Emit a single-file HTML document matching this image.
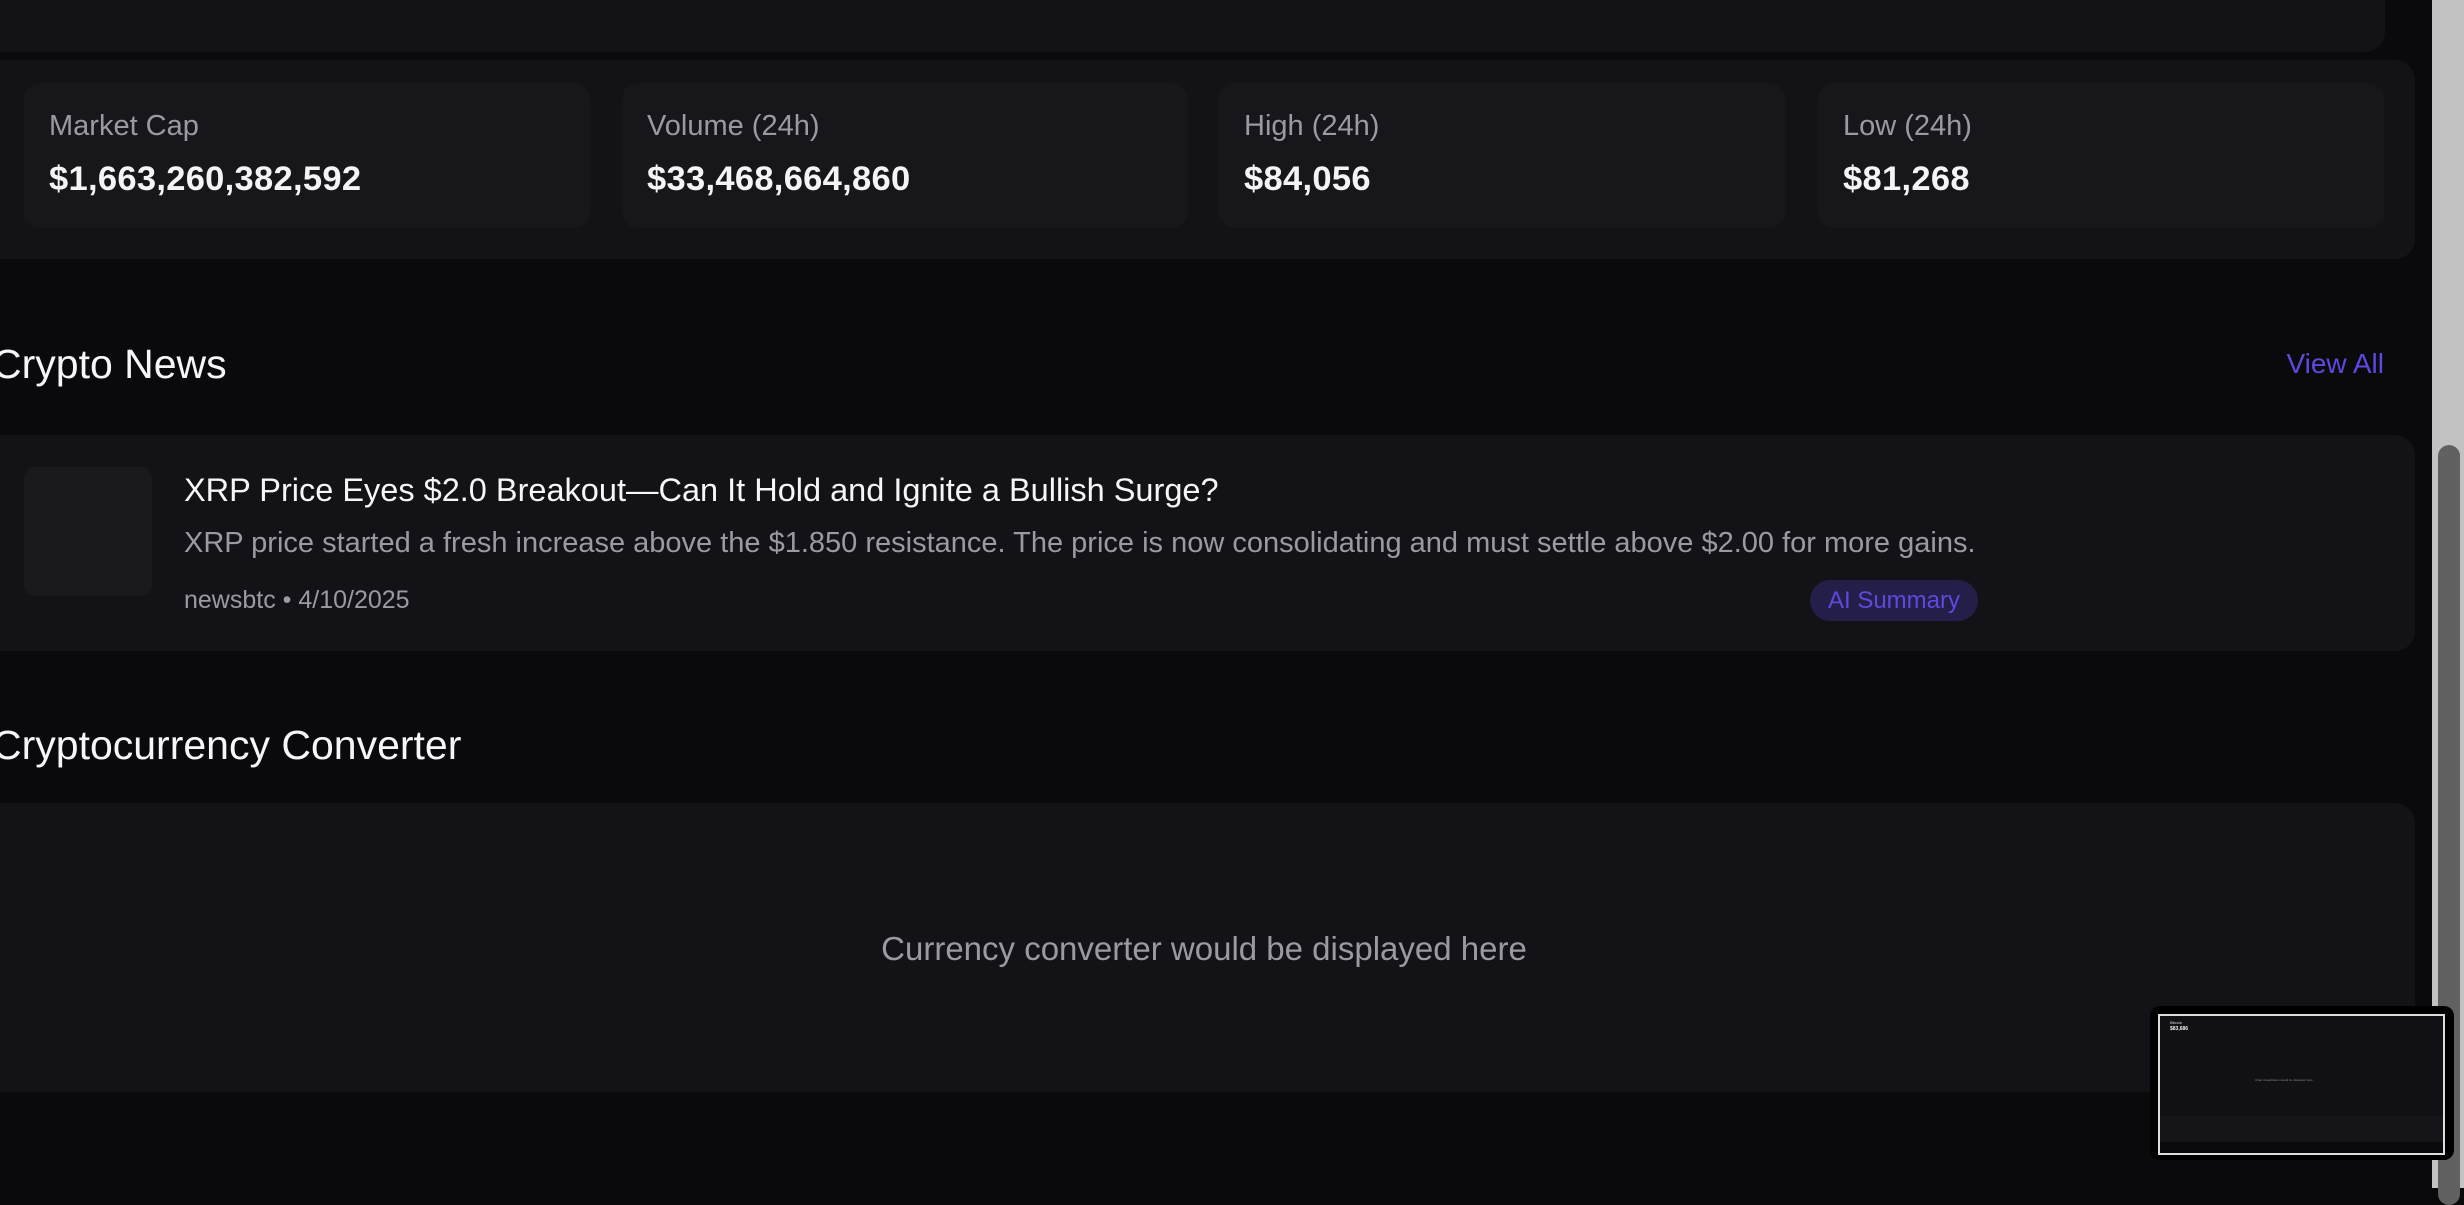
<!DOCTYPE html>
<html><head><meta charset="utf-8"><style>
*{box-sizing:border-box;margin:0;padding:0}
body{width:2464px;height:1188px;background:#0a0a0c;overflow:hidden;position:relative;font-family:"Liberation Sans",sans-serif;color:#fff}
.abs{position:absolute}
.card{background:#131317;border-radius:20px}
.stat{background:#17171b;border-radius:16px;position:absolute;top:83px;height:145px;width:566px}
.stat .l{position:absolute;left:25px;top:27px;font-size:29px;color:#9a9aa2}
.stat .v{position:absolute;left:25px;top:77px;font-size:34.5px;font-weight:bold;color:#f4f4f6;letter-spacing:0.3px}
</style></head><body>
<div class="abs card" style="left:-30px;top:-30px;width:2415px;height:82px"></div>
<div class="abs card" style="left:-30px;top:60px;width:2445px;height:199px"></div>
<div class="stat" style="left:24px"><div class="l">Market Cap</div><div class="v">$1,663,260,382,592</div></div>
<div class="stat" style="left:622px"><div class="l">Volume (24h)</div><div class="v">$33,468,664,860</div></div>
<div class="stat" style="left:1219px"><div class="l">High (24h)</div><div class="v">$84,056</div></div>
<div class="stat" style="left:1818px"><div class="l">Low (24h)</div><div class="v">$81,268</div></div>

<div class="abs" style="left:-8px;top:341px;font-size:41px;color:#f6f6f8">Crypto News</div>
<div class="abs" style="right:80px;top:348px;font-size:28px;color:#5b4ae0">View All</div>

<div class="abs card" style="left:-30px;top:435px;width:2445px;height:216px"></div>
<div class="abs" style="left:24px;top:467px;width:128px;height:129px;background:#1a1a1e;border-radius:12px"></div>
<div class="abs" style="left:184px;top:472px;font-size:32.5px;color:#f6f6f8">XRP Price Eyes $2.0 Breakout—Can It Hold and Ignite a Bullish Surge?</div>
<div class="abs" style="left:184px;top:527px;font-size:29px;color:#9a9aa2">XRP price started a fresh increase above the $1.850 resistance. The price is now consolidating and must settle above $2.00 for more gains.</div>
<div class="abs" style="left:184px;top:586px;font-size:25px;color:#9a9aa2">newsbtc • 4/10/2025</div>
<div class="abs" style="left:1810px;top:580px;width:168px;height:41px;border-radius:21px;background:#241f48;color:#5b4ae0;font-size:24px;line-height:41px;text-align:center">AI Summary</div>

<div class="abs" style="left:-8px;top:722px;font-size:41px;color:#f6f6f8">Cryptocurrency Converter</div>
<div class="abs card" style="left:-30px;top:803px;width:2445px;height:289px"></div>
<div class="abs" style="left:0;width:2408px;top:930px;text-align:center;font-size:33px;color:#9a9aa2">Currency converter would be displayed here</div>

<div class="abs" style="left:2432px;top:0;width:32px;height:1188px;background:#c2c2c2"></div>
<div class="abs" style="left:2438px;top:445px;width:22px;height:760px;background:#616161;border-radius:11px"></div>

<div class="abs" style="left:2150px;top:1006px;width:304px;height:154px;background:#000;border-radius:10px"></div>
<div class="abs" style="left:2158px;top:1014px;width:287px;height:141px;border:2px solid #ddd;background:#111115;overflow:hidden">
 <div class="abs" style="left:10px;top:4px;font-size:4px;color:#ddd">Bitcoin</div>
 <div class="abs" style="left:10px;top:10px;font-size:5px;color:#eee;font-weight:bold">$83,686</div>
 <div class="abs" style="left:0;top:100px;width:287px;height:26px;background:#151519"></div>
 <div class="abs" style="left:0;top:126px;width:287px;height:15px;background:#0a0a0c"></div>
 <div class="abs" style="left:95px;top:62px;font-size:3px;color:#888">Chart visualization would be displayed here</div>
</div>
</body></html>
